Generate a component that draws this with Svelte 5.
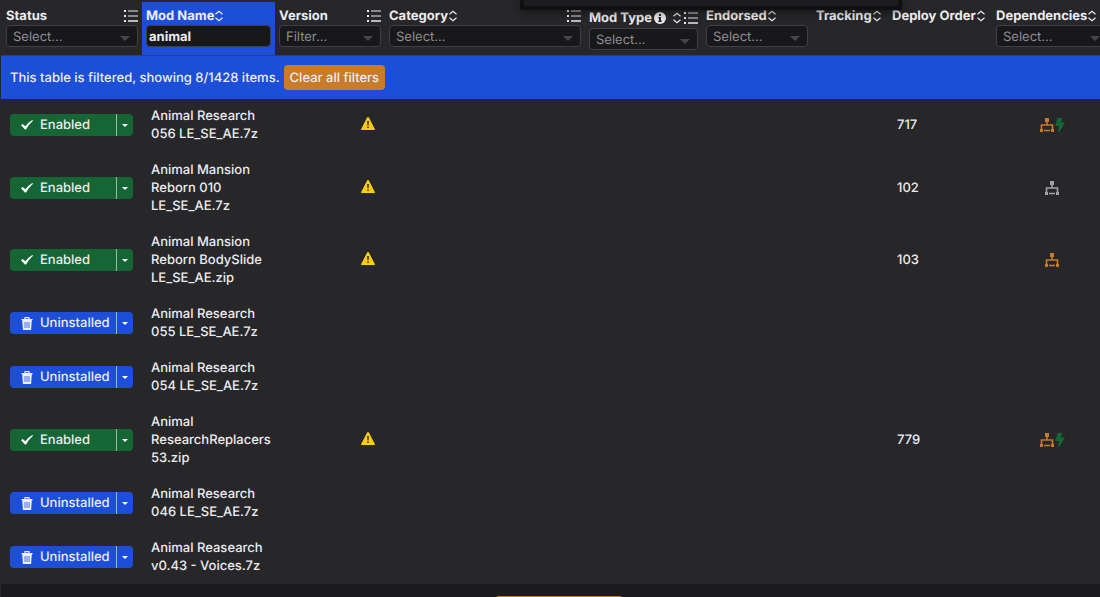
<script>
  const columns = [
    { id: 'status', label: 'Status', width: 141, list: true, filter: 'Select...' },
    { id: 'name', label: 'Mod Name', width: 133, sort: true, search: true },
    { id: 'version', label: 'Version', width: 110, list: true, filter: 'Filter...' },
    { id: 'category', label: 'Category', width: 200, sort: true, list: true, filter: 'Select...' },
    { id: 'type', label: 'Mod Type', width: 117, sort: true, list: true, info: true, filter: 'Select...' },
    { id: 'endorsed', label: 'Endorsed', width: 110, sort: true, filter: 'Select...' },
    { id: 'tracking', label: 'Tracking', width: 76, sort: true },
    { id: 'order', label: 'Deploy Order', width: 104, sort: true },
    { id: 'deps', label: 'Dependencies', width: 120, sort: true, filter: 'Select...' }
  ];

  const mods = [
    { name: 'Animal Research 056 LE_SE_AE.7z', enabled: true, order: 717, deps: 'orange', bolt: true },
    { name: 'Animal Mansion Reborn 010 LE_SE_AE.7z', enabled: true, order: 102, deps: 'grey' },
    { name: 'Animal Mansion Reborn BodySlide LE_SE_AE.zip', enabled: true, order: 103, deps: 'orange' },
    { name: 'Animal Research 055 LE_SE_AE.7z', enabled: false },
    { name: 'Animal Research 054 LE_SE_AE.7z', enabled: false },
    { name: 'Animal ResearchReplacers 53.zip', enabled: true, order: 779, deps: 'orange', bolt: true },
    { name: 'Animal Research 046 LE_SE_AE.7z', enabled: false },
    { name: 'Animal Reasearch v0.43 - Voices.7z', enabled: false }
  ];

  let query = $state('animal');
</script>

<div class="page">
  <div class="panel"></div>
  <main>
    <table>
      <colgroup>
        {#each columns as col}
          <col style="width: {col.width}px" />
        {/each}
      </colgroup>
      <thead>
        <tr>
          {#each columns as col}
            <th scope="col" class:active={col.search}>
              <div class="head" class:tall={col.info}>
                <label for={col.filter || col.search ? col.id : undefined}>{col.label}</label>
                {#if col.info}
                  <svg class="info" viewBox="0 0 12 12" width="12" height="12">
                    <circle cx="6" cy="6" r="6" fill="#e8e8ea" />
                    <path d="M5 2h2v2H5zM4.500 5H7v3.500h.7V10H4.300V8.500H5V6.500h-.5z" fill="#27272a" />
                  </svg>
                {/if}
                {#if col.sort}
                  <button class="icon sort" class:push={col.info} aria-label="Sort">
                    <svg viewBox="0 0 10 12" width="10" height="12">
                      <path d="M1.500 4.300L5 1.200l3.500 3.100M1.500 7.700L5 10.800l3.500-3.100" fill="none" stroke="currentColor" stroke-width="1.200" />
                    </svg>
                  </button>
                {/if}
                {#if col.list}
                  <button class="icon list" class:push={!col.info} aria-label="Group">
                    <svg viewBox="0 0 14 12" width="14" height="12" fill="currentColor">
                      <path d="M0 0h2v2H0zM0 5h2v2H0zM0 10h2v2H0zM4 .5h10v1H4zM4 5.500h10v1H4zM4 10.300h10v1.400H4z" />
                    </svg>
                  </button>
                {/if}
              </div>
              {#if col.search}
                <input id={col.id} type="text" bind:value={query} />
              {:else if col.filter}
                <div class="select">
                  <select id={col.id}><option>{col.filter}</option></select>
                  <svg viewBox="0 0 10 5" width="10" height="5"><path d="M0 0h10L5 5z" fill="#46464d" /></svg>
                </div>
              {/if}
            </th>
          {/each}
        </tr>
      </thead>
      <tbody>
        <tr class="notice">
          <td colspan={columns.length}>
            <div>
              <span>This table is filtered, showing 8/1428 items.</span>
              <button onclick={() => (query = '')}>Clear all filters</button>
            </div>
          </td>
        </tr>
        {#each mods as mod}
          <tr class="mod">
            <td>
              <div class="split" class:on={mod.enabled}>
                <button class="state">
                  {#if mod.enabled}
                    <svg viewBox="0 0 12 10" width="12" height="10">
                      <path d="M0 5.300L1.700 4l2.600 2.200Q7.300 2.500 11.300 0l.7.800Q7.800 4.500 5 9.500H4z" fill="#fff" />
                    </svg>
                    Enabled
                  {:else}
                    <svg viewBox="0 0 12 13" width="12" height="13">
                      <path d="M4 2V.7h4V2M.5 2.600h11" fill="none" stroke="#eef" stroke-width="1.200" />
                      <path d="M1.200 3h9.600l-.7 10H1.900z" fill="#eef" />
                      <path d="M4 5v6M6 5v6M8 5v6" stroke="#1d4ed8" stroke-width=".8" />
                    </svg>
                    Uninstalled
                  {/if}
                </button>
                <button class="more" aria-label="More actions">
                  <svg viewBox="0 0 6 3" width="6" height="3"><path d="M0 0h6L3 3z" fill="#fff" /></svg>
                </button>
              </div>
            </td>
            <td>{mod.name}</td>
            <td class="warn">
              {#if mod.enabled}
                <svg viewBox="0 0 14 13" width="14" height="13">
                  <path d="M7 0q.6 0 .9.600L13.800 12q.3 1-.7 1H.9Q-.1 13 .2 12L6.100.6Q6.400 0 7 0z" fill="#facc15" />
                  <path d="M6 4h2l-.4 4.500H6.400zM6.200 9.400h1.600V11H6.200z" fill="#4a3d12" />
                </svg>
              {/if}
            </td>
            <td></td>
            <td></td>
            <td></td>
            <td></td>
            <td>{mod.order ?? ''}</td>
            <td class="deps">
              {#if mod.deps}
                <svg class={mod.deps} viewBox="0 0 14 14" width="14" height="14">
                  <path d="M5 0h4v4H5zM0 11h3v3H0zM11 11h3v3h-3z" fill="currentColor" />
                  <path d="M7 4v3M1.500 11V7h11v4M4 12.500h6" fill="none" stroke="currentColor" stroke-width="1.600" />
                </svg>
              {/if}
              {#if mod.bolt}
                <svg class="bolt" viewBox="0 0 10 14" width="10" height="14">
                  <path d="M2.500 0h4.800L6 4.500h4L4.300 14H3l1-6H.300z" fill="#166534" />
                </svg>
              {/if}
            </td>
          </tr>
        {/each}
      </tbody>
    </table>
  </main>
  <footer><button aria-label="Drop files"></button></footer>
</div>

<style>
  :global(body) {
    background: #27272a;
  }
  .page {
    position: relative;
    box-sizing: border-box;
    height: 100vh;
    padding: 2px 0 0 1px;
    overflow: hidden;
    display: flex;
    flex-direction: column;
    background: #27272a;
    color: #ececef;
    font: 500 13px/18px Inter, sans-serif;
    text-rendering: geometricPrecision;
  }
  .panel {
    position: absolute;
    z-index: 1;
    top: 0;
    left: 520px;
    right: 198px;
    height: 10px;
    box-sizing: border-box;
    border: solid #101011;
    border-width: 0 4px 4px;
    border-radius: 0 0 3px 3px;
    background: #1b1b20;
    box-shadow: 0 2px 10px #00000080;
  }
  main {
    flex: none;
  }
  button,
  input,
  select {
    font: inherit;
    color: inherit;
    margin: 0;
    text-rendering: inherit;
  }
  button {
    border: 0;
    padding: 0;
    background: none;
    cursor: pointer;
  }
  svg {
    display: block;
    flex: none;
  }
  table {
    width: calc(100% + 12px);
    table-layout: fixed;
    border-collapse: separate;
    border-spacing: 0;
  }
  th {
    padding: 5px 4px;
    vertical-align: top;
    text-align: left;
    font-weight: 700;
    border-bottom: 1px solid #3f3f46;
  }
  th:first-child {
    padding-left: 5px;
  }
  .active {
    background: #1d4ed8;
  }
  .head {
    display: flex;
    align-items: center;
    height: 18px;
    white-space: nowrap;
  }
  .tall {
    height: 21px;
  }
  .info {
    margin-left: 2px;
  }
  .list {
    margin-left: 2px;
  }
  .push {
    margin-left: auto;
  }
  .select {
    position: relative;
  }
  .select svg {
    position: absolute;
    right: 8px;
    top: 11px;
    pointer-events: none;
  }
  input,
  select {
    display: block;
    box-sizing: border-box;
    width: 100%;
    height: 22px;
    border: 1px solid #3f3f46;
    border-radius: 4px;
    background: #18181b;
  }
  input {
    padding: 2px 2px 0;
    outline: none;
  }
  select {
    appearance: none;
    padding: 2px 6px 0;
    font-weight: 400;
    line-height: 18px;
    color: #8e8e96;
  }
  td {
    padding: 9px;
    vertical-align: middle;
  }
  .notice td {
    background: #1d4ed8;
  }
  .notice div {
    display: flex;
    align-items: center;
    gap: 4px;
  }
  .notice button {
    height: 25px;
    padding: 0 6px;
    border-radius: 4px;
    background: #c87b28;
  }
  .notice + .mod td {
    padding-top: 8px;
  }
  .split {
    display: flex;
    height: 22px;
    border-radius: 4px;
    background: #1d4ed8;
    overflow: hidden;
  }
  .on {
    background: #166534;
  }
  .state {
    flex: 1;
    display: flex;
    align-items: center;
    gap: 7px;
    padding-left: 11px;
  }
  .more {
    width: 17px;
    display: grid;
    place-items: center;
    border-left: 1px solid #ffffff90;
  }
  .mod .warn {
    padding-right: 10px;
    padding-bottom: 12px;
  }
  .warn svg {
    margin-left: auto;
  }
  .deps {
    text-align: center;
    font-size: 0;
  }
  .deps svg {
    display: inline-block;
    vertical-align: middle;
  }
  .bolt {
    margin-left: 1px;
  }
  .orange {
    color: #c87b28;
  }
  .grey {
    color: #a1a1aa;
  }
  footer {
    flex: 1 0 auto;
    display: flex;
    justify-content: center;
    padding: 12px 0 0 16px;
    background: #1c1c1e;
  }
  footer button {
    width: 128px;
    height: 30px;
    border-radius: 4px;
    background: #c87b28;
  }
</style>
